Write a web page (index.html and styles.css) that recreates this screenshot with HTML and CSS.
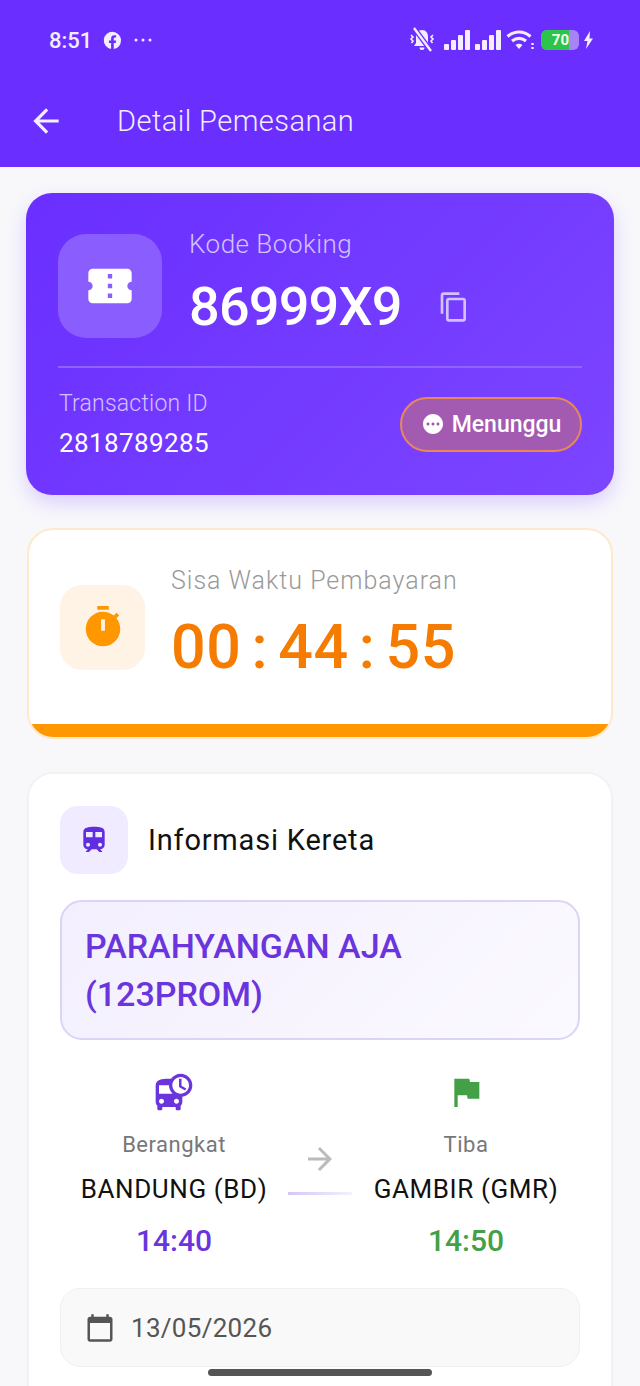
FILE: index.html
```html
<!DOCTYPE html>
<html lang="id">

<head>
    <meta charset="UTF-8">
    <meta name="viewport" content="width=device-width, initial-scale=1.0">
    <title>Detail Pemesanan</title>
    <link rel="stylesheet" href="styles.css">
</head>

<body>
    <header class="top">
        <div class="status-bar">
            <div class="status-left">
                <span class="clock">8:51</span>
                <svg class="fb" width="19" height="19" viewBox="0 0 24 24" fill="currentColor">
                    <path d="M12 1a11 11 0 0 0-1.8 21.85V15H7.5v-3h2.7V9.7c0-2.7 1.6-4.2 4-4.2 1.2 0 2.4.2 2.4.2v2.6h-1.3c-1.3 0-1.7.8-1.7 1.6V12h3l-.5 3h-2.5v7.85A11 11 0 0 0 12 1z" />
                </svg>
                <svg width="20" height="6" viewBox="0 0 20 6" fill="currentColor">
                    <circle cx="3" cy="3" r="1.5" />
                    <circle cx="10" cy="3" r="1.5" />
                    <circle cx="17" cy="3" r="1.5" />
                </svg>
            </div>
            <div class="status-right">
                <svg class="bell" width="28" height="26" viewBox="0 0 28 26" fill="currentColor">
                    <path d="M14 3c-4 0-6 3-6 7v6l-2 3h16l-2-3v-6c0-4-2-7-6-7zM11.500 20.500a2.500 2.500 0 0 0 5 0z" />
                    <path d="M3 8l2 2-2 2 2 2-1.500 2M25 8l-2 2 2 2-2 2 1.500 2" fill="none" stroke="currentColor" stroke-width="1.600" />
                    <path d="M6 1l17 23" stroke="#6a2fff" stroke-width="5" />
                    <path d="M6 1l17 23" stroke="currentColor" stroke-width="2.400" />
                </svg>
                <svg width="27" height="22" viewBox="0 0 27 22" fill="currentColor">
                    <rect x="0" y="15" width="5" height="6" rx="1" />
                    <rect x="7" y="11" width="5" height="10" rx="1" />
                    <rect x="14" y="6" width="5" height="15" rx="1" />
                    <rect x="21" y="1" width="5" height="20" rx="1" />
                </svg>
                <svg width="27" height="22" viewBox="0 0 27 22" fill="currentColor">
                    <rect x="0" y="15" width="5" height="6" rx="1" />
                    <rect x="7" y="11" width="5" height="10" rx="1" />
                    <rect x="14" y="6" width="5" height="15" rx="1" />
                    <rect x="21" y="1" width="5" height="20" rx="1" />
                </svg>
                <svg width="29" height="22" viewBox="0 0 29 22" fill="none" stroke="currentColor" stroke-width="3.200">
                    <path d="M1.500 7.500c7-6 16-6 23 0" />
                    <path d="M6 12c4.500-3.500 9.500-3.500 14 0" />
                    <path d="M13 20l-3.500-4c2.200-1.600 4.800-1.600 7 0z" fill="currentColor" stroke="none" />
                    <path d="M26.500 14v2M26.500 18v2" stroke-width="2.400" />
                </svg>
                <div class="battery">
                    <div class="battery-fill">70</div>
                </div>
                <svg width="11" height="18" viewBox="0 0 11 18" fill="currentColor">
                    <path d="M7 0L1 10h3.500L3 18l7-10.500H6.500z" />
                </svg>
            </div>
        </div>
        <div class="app-bar">
            <svg class="back" width="38" height="38" viewBox="0 0 24 24" fill="currentColor">
                <path d="M20 11H7.830l5.590-5.590L12 4l-8 8 8 8 1.410-1.410L7.830 13H20v-2z" />
            </svg>
            <h1>Detail Pemesanan</h1>
        </div>
    </header>

    <main class="content">
        <section class="booking-card">
            <div class="booking-top">
                <div class="ticket-box">
                    <svg width="52" height="52" viewBox="0 0 24 24" fill="currentColor">
                        <path d="M22 10V6c0-1.110-.9-2-2-2H4c-1.100 0-1.990.89-1.990 2v4c1.100 0 1.990.9 1.990 2s-.89 2-2 2v4c0 1.100.9 2 2 2h16c1.100 0 2-.9 2-2v-4c-1.100 0-2-.9-2-2s.9-2 2-2zm-9 7.500h-2v-2h2v2zm0-4.500h-2v-2h2v2zm0-4.500h-2v-2h2v2z" />
                    </svg>
                </div>
                <div class="booking-code">
                    <div class="code-label">Kode Booking</div>
                    <div class="code-row">
                        <span class="code">86999X9</span>
                        <svg class="copy" width="32" height="32" viewBox="0 0 24 24" fill="currentColor">
                            <path d="M16 1H4c-1.100 0-2 .9-2 2v14h2V3h12V1zm3 4H8c-1.100 0-2 .9-2 2v14c0 1.100.9 2 2 2h11c1.100 0 2-.9 2-2V7c0-1.100-.9-2-2-2zm0 16H8V7h11v14z" />
                        </svg>
                    </div>
                </div>
            </div>
            <div class="booking-bottom">
                <div>
                    <div class="trans-label">Transaction ID</div>
                    <div class="trans-id">2818789285</div>
                </div>
                <div class="status-pill">
                    <svg width="24" height="24" viewBox="0 0 24 24" fill="currentColor">
                        <path d="M12 2C6.480 2 2 6.480 2 12s4.480 10 10 10 10-4.480 10-10S17.520 2 12 2zM7 13.500c-.83 0-1.500-.67-1.500-1.500s.67-1.500 1.500-1.500 1.500.67 1.500 1.500-.67 1.500-1.500 1.500zm5 0c-.83 0-1.500-.67-1.500-1.500s.67-1.500 1.500-1.500 1.500.67 1.500 1.500-.67 1.500-1.500 1.500zm5 0c-.83 0-1.500-.67-1.500-1.500s.67-1.500 1.500-1.500 1.500.67 1.500 1.500-.67 1.500-1.500 1.500z" />
                    </svg>
                    Menunggu
                </div>
            </div>
        </section>

        <section class="timer-card">
            <div class="timer-body">
                <div class="timer-box">
                    <svg width="46" height="46" viewBox="0 0 24 24" fill="currentColor" fill-rule="evenodd">
                        <path d="M15 1H9v2h6V1zm-4 13h2V8h-2v6zm8.030-6.610l1.420-1.420c-.43-.51-.9-.99-1.410-1.410l-1.420 1.420C16.070 4.740 14.120 4 12 4c-4.970 0-9 4.030-9 9s4.020 9 9 9 9-4.030 9-9c0-2.120-.74-4.070-1.970-5.610z" />
                    </svg>
                </div>
                <div class="timer-text">
                    <div class="timer-label">Sisa Waktu Pembayaran</div>
                    <div class="timer-value">00 : 44 : 55</div>
                </div>
            </div>
            <div class="timer-progress"></div>
        </section>

        <section class="train-card">
            <div class="train-head">
                <div class="train-box">
                    <svg width="32" height="32" viewBox="0 0 24 24" fill="currentColor">
                        <path d="M12 2c-4 0-8 .5-8 4v9.500C4 17.430 5.570 19 7.500 19L6 20.500v.5h2.230l2-2H14l2 2h2v-.5L16.500 19c1.930 0 3.500-1.570 3.500-3.500V6c0-3.500-3.580-4-8-4zM7.500 17c-.83 0-1.500-.67-1.500-1.500S6.670 14 7.500 14s1.500.67 1.500 1.500S8.330 17 7.500 17zm3.500-7H6V6h5v4zm2 0V6h5v4h-5zm3.500 7c-.83 0-1.500-.67-1.500-1.500s.67-1.500 1.500-1.500 1.500.67 1.500 1.500-.67 1.500-1.500 1.500z" />
                    </svg>
                </div>
                <h2>Informasi Kereta</h2>
            </div>

            <div class="train-name">PARAHYANGAN AJA (123PROM)</div>

            <div class="route">
                <div class="stop">
                    <svg class="stop-icon depart" width="40" height="40" viewBox="0 0 24 24" fill="currentColor">
                        <path d="M16 1c-2.400 0-4.520 1.210-5.780 3.050.01-.01.01-.02.02-.03C9.840 4 9.420 4 9 4c-4.420 0-8 .5-8 4v10c0 .88.39 1.670 1 2.220V22c0 .55.45 1 1 1h1c.55 0 1-.45 1-1v-1h8v1c0 .55.45 1 1 1h1c.55 0 1-.45 1-1v-1.780c.61-.55 1-1.340 1-2.220v-3.080c3.390-.49 6-3.390 6-6.920 0-3.870-3.130-7-7-7zM4.500 19c-.83 0-1.500-.67-1.500-1.500S3.670 16 4.500 16s1.500.67 1.500 1.500S5.330 19 4.500 19zM3 13V8h6c0 1.960.81 3.730 2.110 5H3zm10.500 6c-.83 0-1.500-.67-1.500-1.500s.67-1.500 1.500-1.500 1.500.67 1.500 1.500-.67 1.500-1.500 1.500zm2.500-6c-2.760 0-5-2.240-5-5s2.240-5 5-5 5 2.240 5 5-2.240 5-5 5zm.5-9H15v5l3.620 2.160.75-1.230-2.870-1.680V4z" />
                    </svg>
                    <div class="stop-label">Berangkat</div>
                    <div class="stop-name">BANDUNG (BD)</div>
                    <div class="stop-time depart">14:40</div>
                </div>
                <div class="route-mid">
                    <svg width="36" height="36" viewBox="0 0 24 24" fill="currentColor">
                        <path d="M12 4l-1.410 1.410L16.170 11H4v2h12.170l-5.580 5.590L12 20l8-8z" />
                    </svg>
                    <div class="route-line"></div>
                </div>
                <div class="stop">
                    <svg class="stop-icon arrive" width="40" height="40" viewBox="0 0 24 24" fill="currentColor">
                        <path d="M14.400 6L14 4H5v17h2v-7h5.600l.4 2h7V6z" />
                    </svg>
                    <div class="stop-label">Tiba</div>
                    <div class="stop-name">GAMBIR (GMR)</div>
                    <div class="stop-time arrive">14:50</div>
                </div>
            </div>

            <div class="date-box">
                <svg width="30" height="30" viewBox="0 0 24 24" fill="currentColor">
                    <path d="M20 3h-1V1h-2v2H7V1H5v2H4c-1.100 0-2 .9-2 2v16c0 1.100.9 2 2 2h16c1.100 0 2-.9 2-2V5c0-1.100-.9-2-2-2zm0 18H4V8h16v13z" />
                </svg>
                13/05/2026
            </div>
        </section>
    </main>

    <div class="home-bar"></div>
</body>

</html>
```

FILE: styles.css
```css
* {
    margin: 0;
    padding: 0;
    box-sizing: border-box;
}

body {
    height: 1386px;
    overflow: hidden;
    background: #f8f8fb;
    font-family: Roboto, sans-serif;
}

/* header */
.top {
    height: 167px;
    background: #6a2fff;
    color: #f4edff;
}

.status-bar {
    height: 80px;
    padding: 0 46px 0 49px;
    display: flex;
    justify-content: space-between;
    align-items: center;
}

.status-left {
    display: flex;
    align-items: center;
    gap: 11px;
}

.clock {
    font-size: 22px;
    font-weight: 500;
}

.status-right {
    display: flex;
    align-items: center;
    gap: 4px;
}

.bell {
    margin-right: 4px;
}

.battery {
    width: 38px;
    height: 20px;
    margin-left: 2px;
    border-radius: 6px;
    background: #a784f5;
    overflow: hidden;
}

.battery-fill {
    width: 28px;
    height: 20px;
    background: #2dc44a;
    color: #f4fff0;
    font-size: 15px;
    font-weight: 700;
    line-height: 20px;
    text-align: right;
}

.app-bar {
    display: flex;
    align-items: center;
    height: 82px;
    padding-left: 27px;
}

.back {
    margin-right: 52px;
}

h1 {
    font-size: 29px;
    font-weight: 300;
    letter-spacing: 0.45px;
}

.content {
    padding: 26px 26px 0;
    display: flex;
    flex-direction: column;
}

/* booking card */
.booking-card {
    height: 302px;
    padding: 32px;
    border-radius: 26px;
    background: linear-gradient(135deg, #6a2fff 0%, #7c45ff 100%);
    box-shadow: 0 8px 20px rgba(106, 47, 255, 0.2);
    color: #fff;
}

.booking-top {
    display: flex;
    align-items: flex-start;
    gap: 27px;
    height: 143px;
    border-bottom: 2px solid #8f63ff;
}

.ticket-box {
    width: 104px;
    height: 104px;
    margin-top: 9px;
    border-radius: 28px;
    background: #8a5dff;
    display: flex;
    align-items: center;
    justify-content: center;
}

.booking-code {
    margin-top: 4px;
}

.code-label {
    font-size: 26px;
    font-weight: 300;
    line-height: 30px;
    letter-spacing: 0.5px;
    color: #d3c2ff;
}

.code-row {
    display: flex;
    align-items: center;
    gap: 36px;
    margin-top: 17px;
}

.code {
    font-size: 54px;
    font-weight: 470;
    line-height: 62px;
    letter-spacing: -0.8px;
}

.copy {
    color: #d3c2ff;
}

.booking-bottom {
    display: flex;
    justify-content: space-between;
    align-items: center;
    margin-top: 22px;
    padding-left: 1px;
}

.trans-label {
    font-size: 23px;
    font-weight: 300;
    letter-spacing: 0.2px;
    color: #d3c2ff;
}

.trans-id {
    font-size: 26px;
    margin-top: 11px;
    letter-spacing: 0.4px;
}

.status-pill {
    width: 182px;
    height: 55px;
    border: 2px solid #e8875a;
    border-radius: 28px;
    background: #a25bb0;
    display: flex;
    align-items: center;
    justify-content: center;
    gap: 7px;
    font-size: 23px;
    font-weight: 470;
}

/* timer card */
.timer-card {
    height: 211px;
    margin: 33px 1px 0;
    border: 2px solid #fdeacb;
    border-radius: 26px;
    background: #fff;
    overflow: hidden;
    display: flex;
    flex-direction: column;
}

.timer-body {
    flex: 1;
    display: flex;
    align-items: center;
    gap: 26px;
    padding-left: 31px;
}

.timer-box {
    width: 85px;
    height: 85px;
    border-radius: 22px;
    background: #fff3e5;
    color: #ff9800;
    display: flex;
    align-items: center;
    justify-content: center;
}

.timer-text {
    padding-bottom: 3px;
}

.timer-label {
    font-size: 25px;
    font-weight: 300;
    line-height: 30px;
    color: #999;
    letter-spacing: 1px;
}

.timer-value {
    font-size: 61px;
    font-weight: 500;
    color: #f57c00;
    line-height: 76px;
    margin-top: 13px;
    letter-spacing: 0.5px;
    word-spacing: -5.5px;
}

.timer-progress {
    height: 13px;
    background: #ff9800;
}

/* train card */
.train-card {
    height: 700px;
    margin: 33px 1px 0;
    padding: 32px 31px;
    border: 2px solid #f2f2f2;
    border-radius: 26px;
    background: #fff;
}

.train-head {
    display: flex;
    align-items: center;
    gap: 20px;
}

.train-box {
    width: 68px;
    height: 68px;
    border-radius: 18px;
    background: #f0ebff;
    color: #5e2ee0;
    display: flex;
    align-items: center;
    justify-content: center;
}

h2 {
    font-size: 29px;
    font-weight: 450;
    color: #111;
    letter-spacing: 0.8px;
}

.train-name {
    margin-top: 26px;
    height: 140px;
    padding: 20px 100px 0 23px;
    border: 2px solid #dcd3f5;
    border-radius: 22px;
    background: linear-gradient(135deg, #f3effe 0%, #fbf9ff 100%);
    color: #6a35dc;
    font-size: 34px;
    font-weight: 470;
    line-height: 48px;
}

.route {
    display: flex;
    margin-top: 32px;
}

.stop {
    flex: 1;
    display: flex;
    flex-direction: column;
    align-items: center;
}

.stop-icon {
    margin-bottom: 15px;
}

.depart {
    color: #6a35dc;
}

.arrive {
    color: #43a047;
}

.stop-label {
    font-size: 22px;
    color: #777;
    line-height: 36px;
    letter-spacing: 0.5px;
}

.stop-name {
    font-size: 26px;
    color: #111;
    line-height: 36px;
    margin-top: 8px;
    letter-spacing: 0.6px;
}

.stop-time {
    font-size: 30px;
    font-weight: 470;
    line-height: 40px;
    margin-top: 14px;
}

.route-mid {
    width: 64px;
    padding-top: 69px;
    display: flex;
    flex-direction: column;
    align-items: center;
    color: #bbb;
}

.route-line {
    width: 64px;
    height: 3px;
    margin-top: 15px;
    background: linear-gradient(90deg, #d5c7f5, #f4f0fe);
}

.date-box {
    margin-top: 27px;
    height: 79px;
    padding-left: 24px;
    border: 1px solid #f0f0f0;
    border-radius: 20px;
    background: #f9f9f9;
    color: #555;
    display: flex;
    align-items: center;
    gap: 16px;
    font-size: 26px;
    letter-spacing: 0.3px;
}

.home-bar {
    position: absolute;
    left: 208px;
    top: 1369px;
    width: 224px;
    height: 7px;
    border-radius: 4px;
    background: #555;
}
```
